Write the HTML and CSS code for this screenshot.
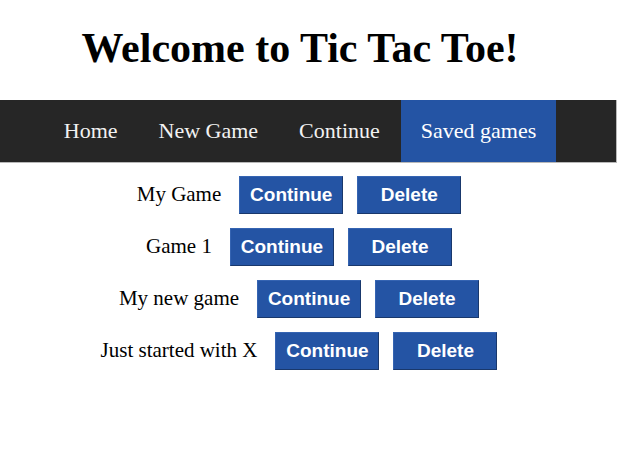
FILE: index.html
```html
<!DOCTYPE html>
<html>
<head>
<meta charset="utf-8">
<link rel="stylesheet" href="styles.css">
</head>
<body>
<div class="page">
  <h1 class="title">Welcome to Tic Tac Toe!</h1>
</div>
<nav class="nav">
  <ul class="nav-list">
    <li class="nav-item">Home</li>
    <li class="nav-item">New Game</li>
    <li class="nav-item">Continue</li>
    <li class="nav-item active">Saved games</li>
  </ul>
</nav>
<div class="page">
  <ul class="games">
    <li class="game"><span class="game-name">My Game</span><button class="btn btn-continue">Continue</button><button class="btn btn-delete">Delete</button></li>
    <li class="game"><span class="game-name">Game 1</span><button class="btn btn-continue">Continue</button><button class="btn btn-delete">Delete</button></li>
    <li class="game"><span class="game-name">My new game</span><button class="btn btn-continue">Continue</button><button class="btn btn-delete">Delete</button></li>
    <li class="game"><span class="game-name">Just started with X</span><button class="btn btn-continue">Continue</button><button class="btn btn-delete">Delete</button></li>
  </ul>
</div>
</body>
</html>
```
FILE: styles.css
```css
html, body {
  margin: 0;
  padding: 0;
  background: #ffffff;
  font-family: "Liberation Serif", "Times New Roman", serif;
  color: #000;
}

.page {
  width: 600px;
}

.title {
  margin: 24px 0 28px;
  font-size: 42px;
  line-height: 48px;
  font-weight: bold;
  text-align: center;
}

.nav {
  background: #262626;
  border-right: 1px solid #b8b8b8;
  border-bottom: 1px solid #b8b8b8;
}

.nav-list {
  list-style: none;
  margin: 0;
  padding: 0;
  width: 600px;
  display: flex;
  justify-content: center;
  gap: 1px;
}

.nav-item {
  padding: 18px 20px;
  font-size: 22px;
  line-height: 26px;
  color: #f2f2f2;
}

.nav-item.active {
  background: #2454a4;
  color: #ffffff;
}

.games {
  list-style: none;
  width: 598px;
  margin: 13px 0 0;
  padding: 0;
  display: flex;
  flex-direction: column;
  gap: 14px;
}

.game {
  display: flex;
  justify-content: center;
  align-items: baseline;
}

.game-name {
  font-size: 21px;
  margin-right: 18px;
}

.btn {
  box-sizing: border-box;
  width: 104px;
  padding: 7px 0;
  margin: 0;
  font-family: "Liberation Sans", Arial, sans-serif;
  font-weight: bold;
  font-size: 19px;
  line-height: 22px;
  color: #ffffff;
  background: #2454a4;
  border: 1px solid;
  border-color: #3564b2 #19386c #19386c #3564b2;
  border-radius: 0;
  text-align: center;
}

.btn-continue {
  margin-right: 14px;
}
```
